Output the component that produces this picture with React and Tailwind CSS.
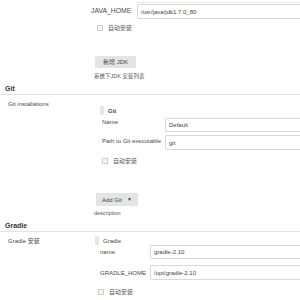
import React from "react";

const Checkbox = ({ label }) => (
  <div className="flex items-center h-[10px]">
    <span className="w-[6px] h-[6px] border border-[#cfcfcf] bg-[#f4f4f4]" />
    <span className="ml-[5px] text-[#555]">{label}</span>
  </div>
);

const Field = ({ value, className = "" }) => (
  <div
    className={`flex-1 flex items-center border border-r-0 border-[#d8d8d8] rounded-l-[2px] pl-[3px] bg-white text-[#444] ${className}`}
  >
    {value}
  </div>
);

const Handle = () => <span className="w-[4px] h-[9px] bg-[#e6e6e6]" />;

const SectionHeader = ({ title }) => (
  <div className="flex items-center h-[13px] pl-[5px] border-b border-[#e4e4e4] text-[7px] font-bold text-[#333]">
    {title}
  </div>
);

const App = () => {
  return (
    <div className="w-[300px] h-[300px] overflow-hidden bg-white text-[#4a4a4a] text-[6px] leading-none font-['Liberation_Sans','Noto_Sans_CJK_SC',sans-serif]">
      {/* JDK tail */}
      <div className="h-[2px]" />
      <div className="ml-[137px] h-px bg-[#e8e8e8]" />
      <div className="mt-[1px] flex items-center h-[15px] pl-[91px]">
        <span className="w-[46px] text-[6.8px]">JAVA_HOME</span>
        <Field value="/usr/java/jdk1.7.0_80" className="h-[15px]" />
      </div>
      <div className="mt-[4px] ml-[97px]">
        <Checkbox label="自动安装" />
      </div>
      <button className="mt-[23px] ml-[95px] flex items-center justify-center w-[41px] h-[12px] bg-[#e4e4e4] text-[#444]">
        新增 JDK
      </button>
      <div className="mt-[4px] ml-[94px] h-[9px] flex items-center text-[5.5px] text-[#555]">
        系统下JDK 安装列表
      </div>

      {/* Git */}
      <div className="mt-[1px]">
        <SectionHeader title="Git" />
      </div>
      <div className="flex">
        <div className="w-[92px] pl-[8px] pt-[4px]">
          <div className="h-[9px] flex items-center">Git installations</div>
        </div>
        <div className="flex-1">
          <div className="mt-[11px] ml-[8px] flex items-center h-[9px]">
            <Handle />
            <span className="ml-[4px] font-bold">Git</span>
          </div>
          <div className="mt-[3px] flex items-start h-[14px]">
            <span className="ml-[10px] w-[63px] pt-[1px]">Name</span>
            <Field value="Default" className="h-[14px]" />
          </div>
          <div className="mt-[3px] flex items-start h-[15px]">
            <span className="ml-[10px] w-[63px] pt-[3px]">Path to Git executable</span>
            <Field value="git" className="h-[15px]" />
          </div>
          <div className="mt-[6px] ml-[10px]">
            <Checkbox label="自动安装" />
          </div>
          <button className="mt-[27px] ml-[4px] flex items-center justify-center gap-[5px] w-[42px] h-[13px] bg-[#e4e4e4] text-[#444]">
            <span>Add Git</span>
            <span className="text-[5px]">▼</span>
          </button>
          <div className="mt-[3px] ml-[2px] h-[9px] flex items-center text-[5.5px] text-[#555]">
            description
          </div>
        </div>
      </div>

      {/* Gradle */}
      <div className="mt-[1px]">
        <SectionHeader title="Gradle" />
      </div>
      <div className="flex">
        <div className="w-[92px] pl-[8px] pt-[4px]">
          <div className="h-[9px] flex items-center">Gradle 安装</div>
        </div>
        <div className="flex-1">
          <div className="mt-[4px] ml-[3px] flex items-center h-[9px]">
            <Handle />
            <span className="ml-[4px]">Gradle</span>
          </div>
          <div className="flex items-center h-[14px]">
            <span className="ml-[8px] w-[50px]">name</span>
            <Field value="gradle-2.10" className="h-[14px]" />
          </div>
          <div className="mt-[6px] flex items-center h-[15px]">
            <span className="ml-[8px] w-[50px]">GRADLE_HOME</span>
            <Field value="/opt/gradle-2.10" className="h-[15px]" />
          </div>
          <div className="mt-[7px] ml-[6px]">
            <Checkbox label="自动安装" />
          </div>
        </div>
      </div>
    </div>
  );
};

export default App;
